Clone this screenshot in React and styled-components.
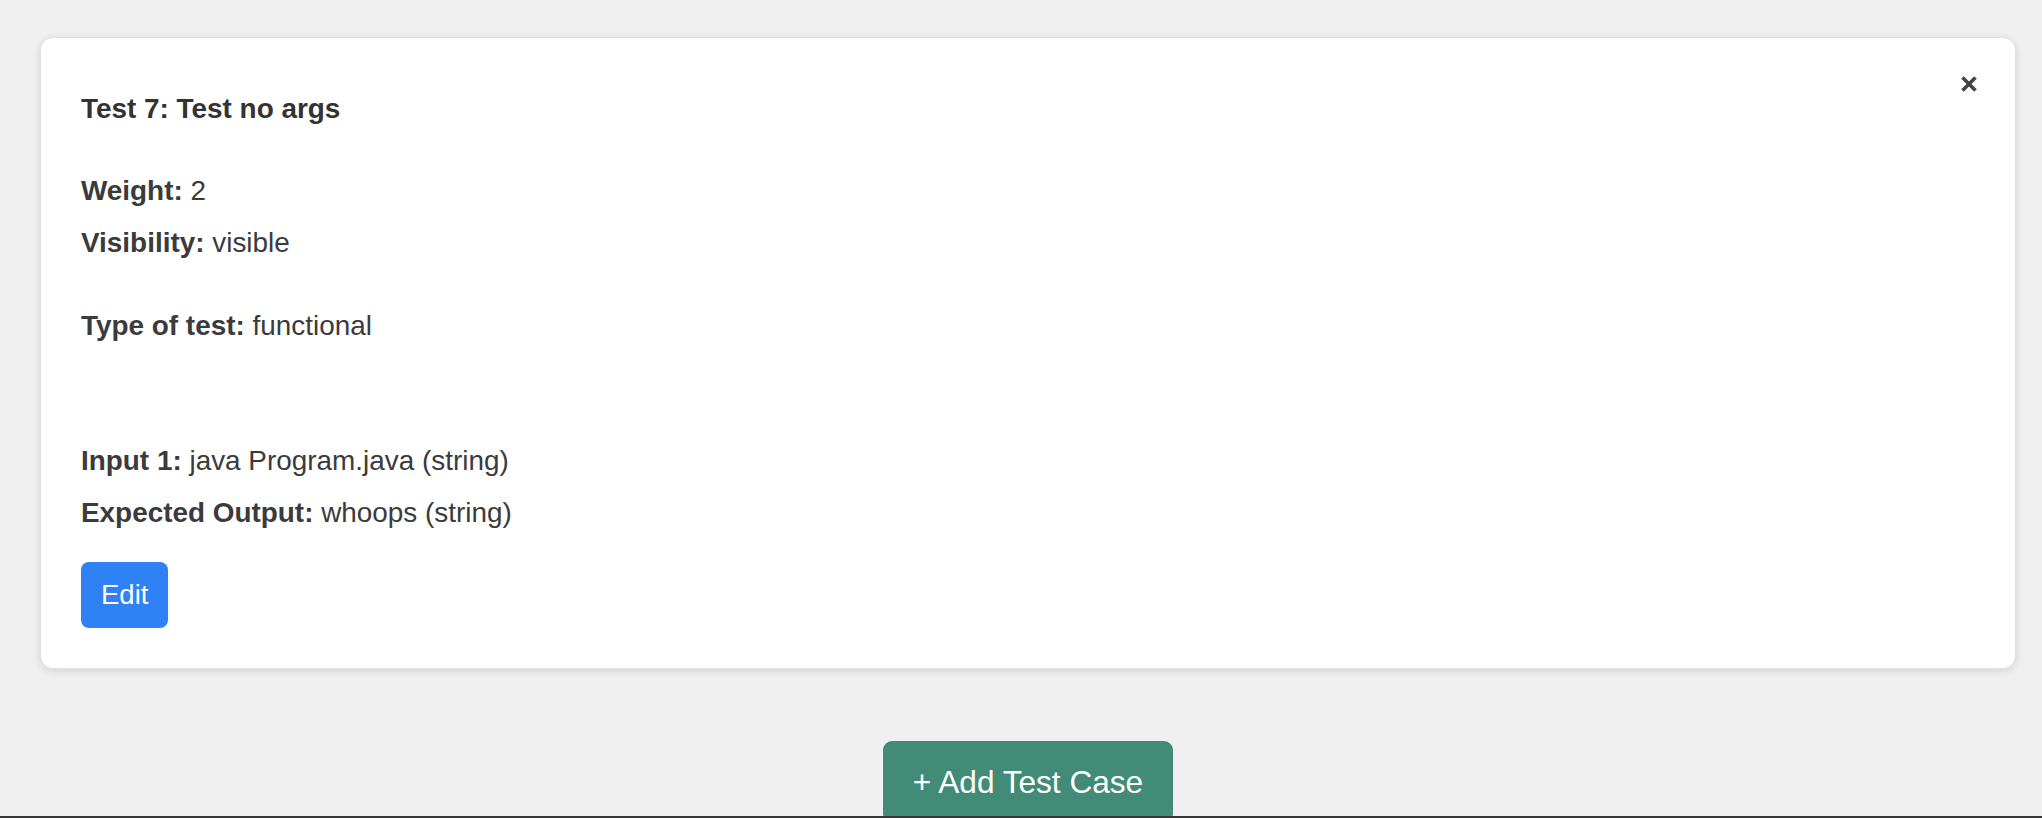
import styled, { createGlobalStyle } from 'styled-components';

const GlobalStyle = createGlobalStyle`
  html, body {
    margin: 0;
    padding: 0;
    background: #f0f0f0;
    font-family: "Liberation Sans", Arial, Helvetica, sans-serif;
    color: #333;
  }
`;

// Page wrapper, card sits a bit off centre like the original
const Page = styled.div`
  padding: 37px 26px 0 40px;
  min-height: 818px;
  box-sizing: border-box;
`;

const Card = styled.div`
  position: relative;
  background: #fff;
  border: 1px solid #e2e2e2;
  border-radius: 13px;
  box-shadow: 0 2px 8px rgba(0, 0, 0, 0.13);
  padding: 15px 40px 40px 40px;
`;

const CloseButton = styled.button`
  position: absolute;
  top: 38px;
  right: 38px;
  width: 16px;
  height: 16px;
  padding: 0;
  border: none;
  background: none;
  cursor: pointer;
  display: flex;
`;

const Title = styled.h4`
  margin: 40px 0 50px;
  font-size: 27.9px;
  line-height: 32px;
  font-weight: bold;
  color: #333;
`;

const Group = styled.div`
  display: flex;
  flex-direction: column;
  gap: 20px;
  margin-top: ${({ gap }) => gap || 0}px;
`;

const Row = styled.div`
  font-size: 27.9px;
  line-height: 32px;
  color: #3b3b3b;

  strong {
    font-weight: bold;
  }
`;

const EditButton = styled.button`
  margin-top: 33px;
  height: 66px;
  padding: 0 20px;
  border: none;
  border-radius: 8px;
  background: #3080f6;
  color: #fff;
  font-family: inherit;
  font-size: 27.5px;
  line-height: 32px;
  cursor: pointer;
`;

const Actions = styled.div`
  display: flex;
  justify-content: center;
  margin-top: 72px;
`;

const AddButton = styled.button`
  padding: 23px 30px;
  border: none;
  border-radius: 9px;
  background: #418b77;
  color: #fff;
  font-family: inherit;
  font-size: 31.6px;
  line-height: 36px;
  cursor: pointer;
`;

const BottomBar = styled.div`
  position: fixed;
  left: 0;
  right: 0;
  bottom: 0;
  height: 2px;
  background: #363636;
`;

const CloseIcon = () => (
  <svg width="16" height="16" viewBox="0 0 16 16">
    <path d="M1.5 1.5 L14.5 14.5 M14.5 1.5 L1.5 14.5" stroke="#444" strokeWidth="3.6" />
  </svg>
);

export default function App() {
  return (
    <>
      <GlobalStyle />
      <Page>
        <Card>
          <CloseButton aria-label="Close">
            <CloseIcon />
          </CloseButton>
          <Title>Test 7: Test no args</Title>
          <Group>
            <Row><strong>Weight:</strong> 2</Row>
            <Row><strong>Visibility:</strong> visible</Row>
          </Group>
          <Group gap={51}>
            <Row><strong>Type of test:</strong> functional</Row>
          </Group>
          <Group gap={103}>
            <Row><strong>Input 1:</strong> java Program.java (string)</Row>
            <Row><strong>Expected Output:</strong> whoops (string)</Row>
          </Group>
          <EditButton>Edit</EditButton>
        </Card>
        <Actions>
          <AddButton>+ Add Test Case</AddButton>
        </Actions>
      </Page>
      <BottomBar />
    </>
  );
}
